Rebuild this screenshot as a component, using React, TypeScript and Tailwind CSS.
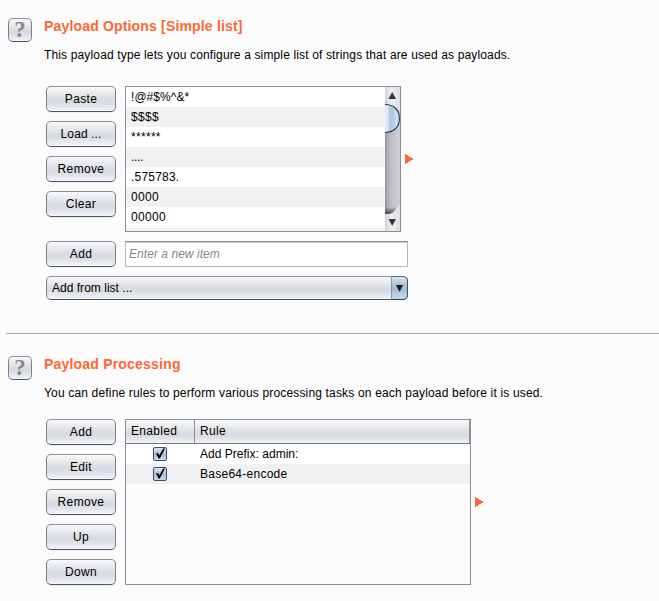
import type { ReactNode } from "react";

const face =
  "border border-t-[#8d9096] border-x-[#7c7f87] border-b-[#50545f] bg-[linear-gradient(180deg,#f8f9fb_0%,#e6e7eb_30%,#d6d9df_58%,#dfe2e9_75%,#f3f6fe_100%)]";

function Button({ children, tight = false }: { children: ReactNode; tight?: boolean }) {
  return (
    <button
      className={`${face} ${tight ? "tracking-[0.1px]" : "tracking-[0.35px]"} flex h-[26px] w-[70px] shrink-0 items-center justify-center rounded-[5px] text-[12px] leading-[14px] shadow-[0_1px_0_#eceef1]`}
    >
      {children}
    </button>
  );
}

function Help() {
  return (
    <div
      className={`${face} flex h-6 w-6 shrink-0 items-center justify-center rounded-[5px]`}
    >
      <span className="font-['Liberation_Serif',serif] text-[23px] leading-[22px] font-bold text-[#85878b]">?</span>
    </div>
  );
}

function Pointer() {
  return (
    <svg width="8" height="10" viewBox="0 0 8 10" shapeRendering="crispEdges">
      <path d="M0 0L8.5 5L0 10Z" fill="#ff6633" />
    </svg>
  );
}

function Check() {
  return (
    <svg width="14" height="14" viewBox="0 0 14 14">
      <defs>
        <linearGradient id="check-face" x1="0" y1="0" x2="0" y2="1">
          <stop offset="0" stopColor="#e2ebf3" />
          <stop offset=".5" stopColor="#a9c0d3" />
          <stop offset="1" stopColor="#c9e0f0" />
        </linearGradient>
      </defs>
      <rect x=".5" y=".5" width="13" height="13" rx="1.5" fill="url(#check-face)" stroke="#34506c" />
      <path d="M3 6.5L5 6L6.2 8.4L10.2 1.5H12L6.8 11.5H5.6Z" fill="#000" />
    </svg>
  );
}

function ScrollBar() {
  return (
    <svg width="15" height="144" viewBox="0 0 15 144">
      <defs>
        <linearGradient id="track">
          <stop offset="0" stopColor="#92949a" />
          <stop offset=".2" stopColor="#b0b1b7" />
          <stop offset=".5" stopColor="#c3c4ca" />
          <stop offset="1" stopColor="#cdced4" />
        </linearGradient>
        <linearGradient id="cap">
          <stop offset="0" stopColor="#cfd0d3" />
          <stop offset=".4" stopColor="#eeeff1" />
          <stop offset="1" stopColor="#dddfe3" />
        </linearGradient>
        <linearGradient id="thumb">
          <stop offset="0" stopColor="#e8f0f8" />
          <stop offset=".2" stopColor="#d9e6f2" />
          <stop offset=".35" stopColor="#aec6dc" />
          <stop offset=".6" stopColor="#b5cfe3" />
          <stop offset="1" stopColor="#d9effc" />
        </linearGradient>
        <linearGradient id="shade" x1="0" x2="0" y1="0" y2="1">
          <stop offset="0" stopColor="#333" stopOpacity="0" />
          <stop offset="1" stopColor="#333" stopOpacity=".85" />
        </linearGradient>
      </defs>
      <rect width="15" height="144" fill="url(#track)" />
      <path d="M0 0H15V24Q9 17 0 17Z" fill="url(#cap)" />
      <path d="M0 120H12L7 127H0Z" fill="url(#shade)" />
      <path d="M0 127H2Q9 127 12 121Q13 119 15 118V144H0Z" fill="url(#cap)" />
      <path d="M0 17.5C8 17.5 14.4 22 14.4 31.5C14.4 41 8 45.5 0 45.5Z" fill="url(#thumb)" />
      <path d="M0 17.5C8 17.5 14.4 22 14.4 31.5C14.4 41 8 45.5 0 45.5" fill="none" stroke="#263f5c" strokeWidth="1.2" />
      <path d="M3.5 12L7.2 5L11 12Z" fill="#35363a" />
      <path d="M3.5 132L7.2 139L11 132Z" fill="#35363a" />
    </svg>
  );
}

const payloads = ["!@#$%^&*", "$$$$", "******", "....", ".575783.", "0000", "00000"];
const rules = [
  { name: "Add Prefix: admin:", spacing: "tracking-[0.02px]" },
  { name: "Base64-encode", spacing: "tracking-[0.26px]" },
];

export default function App() {
  return (
    <main className="h-[601px] w-[659px] overflow-hidden bg-[#fbfbfb] font-['Liberation_Sans',Arial,sans-serif] text-[12px] leading-[14px] whitespace-nowrap text-black">
      <section className="flex h-[333px] gap-3 pt-[18px] pl-2">
        <Help />
        <div>
          <h2 className="h-[30px] text-[14px] leading-[16px] font-bold tracking-[0.17px] text-[#ff6633]">Payload Options [Simple list]</h2>
          <p className="h-[38px] tracking-[0.145px]">This payload type lets you configure a simple list of strings that are used as payloads.</p>
          <div className="ml-[2px] flex">
            <div className="flex w-[79px] flex-col gap-[9px]">
              <Button>Paste</Button>
              <Button tight>Load ...</Button>
              <Button>Remove</Button>
              <Button>Clear</Button>
            </div>
            <div className="flex h-[146px] w-[276px] border border-[#8b8f99] bg-white">
              <ul className="w-[259px] overflow-hidden">
                {payloads.map((item) => (
                  <li key={item} className="h-5 pt-[3px] pl-[5px] tracking-[0.3px] first:tracking-[0.05px] even:bg-[#f1f1f1] nth-[4]:tracking-[-0.3px] nth-[5]:tracking-[0.2px]">{item}</li>
                ))}
                <li className="h-5 bg-[#f1f1f1]" />
              </ul>
              <ScrollBar />
            </div>
            <div className="ml-1 pt-[68px]"><Pointer /></div>
          </div>
          <div className="mt-[9px] ml-[2px] flex gap-[9px]">
            <Button>Add</Button>
            <div className="h-[26px] w-[283px] border border-t-[#85878c] border-x-[#b3b5b8] border-b-[#b8b9bb] bg-white pt-[5px] pl-[3px] tracking-[0.05px] text-[#85878b] italic shadow-[inset_0_1px_0_#cfcfcf]">Enter a new item</div>
          </div>
          <div className={`${face} mt-[9px] ml-[2px] flex h-6 w-[362px] rounded-[5px]`}>
            <span className="flex-1 pt-1 pl-[5px] tracking-[0.02px]">Add from list ...</span>
            <span className="-my-px -mr-px flex w-[17px] items-center justify-center rounded-r-[5px] border border-t-[#57718b] border-r-[#36536f] border-b-[#29435d] border-l-[#8497aa] bg-[linear-gradient(180deg,#d9e4ed_0%,#afc3d4_35%,#a3bbcf_55%,#c5dced_100%)]">
              <svg width="7" height="7" viewBox="0 0 7 7"><path d="M0 0H7L3.5 7Z" fill="#17191d" /></svg>
            </span>
          </div>
        </div>
      </section>
      <hr className="ml-[6px] border-t border-[#a4a9b3]" />
      <section className="flex gap-3 pt-[22px] pl-2">
        <Help />
        <div>
          <h2 className="h-[30px] text-[14px] leading-[16px] font-bold tracking-[0.2px] text-[#ff6633]">Payload Processing</h2>
          <p className="h-[33px] tracking-[0.168px]">You can define rules to perform various processing tasks on each payload before it is used.</p>
          <div className="ml-[2px] flex">
            <div className="flex w-[79px] flex-col gap-[9px]">
              <Button>Add</Button>
              <Button>Edit</Button>
              <Button>Remove</Button>
              <Button>Up</Button>
              <Button>Down</Button>
            </div>
            <div className="h-[166px] w-[346px] border border-[#8b8f99]">
              <div className="flex h-6 border-b border-[#737780] bg-[linear-gradient(180deg,#fafafc_0%,#e2e4e8_40%,#d6d9df_65%,#f0f2f7_100%)] tracking-[0.3px] shadow-[inset_-1px_0_0_#8b8f99]">
                <div className="w-[69px] border-r border-[#8b8f99] pt-1 pl-[5px]">Enabled</div>
                <div className="pt-1 pl-[5px]">Rule</div>
              </div>
              {rules.map((rule) => (
                <div key={rule.name} className="flex h-5 bg-white last:bg-[#f1f1f1]">
                  <div className="flex w-[69px] items-center pl-[27px]"><Check /></div>
                  <div className={`${rule.spacing} pt-[3px] pl-[5px]`}>{rule.name}</div>
                </div>
              ))}
            </div>
            <div className="ml-1 pt-[78px]"><Pointer /></div>
          </div>
        </div>
      </section>
    </main>
  );
}
